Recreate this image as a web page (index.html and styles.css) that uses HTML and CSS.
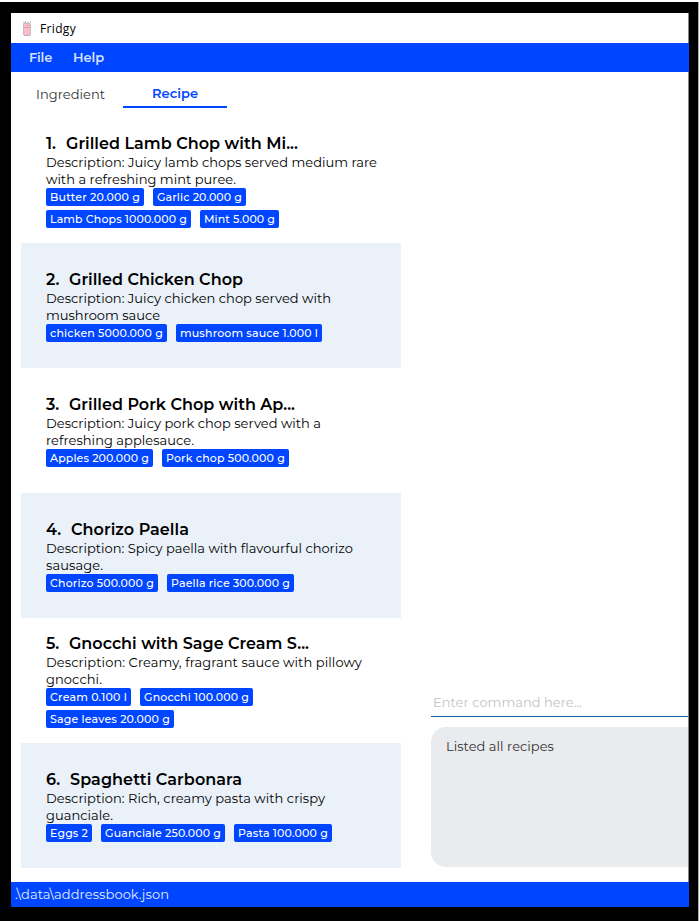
FILE: index.html
```html
<!DOCTYPE html>
<html lang="en">
<head>
<meta charset="utf-8">
<title>Fridgy</title>
<link rel="stylesheet" href="styles.css">
</head>
<body>
<div class="frame">
<div class="window">
  <header class="titlebar">
    <svg class="logo" width="10" height="16" viewBox="0 0 10 16">
      <path d="M1 1h2v1H1zM3 0h1v2H3zM5 1h2v1H5zM8 0h1v2H8z" fill="#c4c4c4"/>
      <rect x="1" y="2" width="8" height="12.500" rx="1" fill="#f7bfca"/>
      <path d="M1.500 3v11M8.500 3v11M2 2.500h6" stroke="#cdb9c1" fill="none"/>
      <path d="M2 6.500h6M5 4.500h2" stroke="#d99fae" fill="none"/>
      <path d="M2 14.500h6" stroke="#b5b0b3"/>
    </svg>
    <span data-w="36">Fridgy</span>
  </header>
  <nav class="menubar"><span data-w="23">File</span><span data-w="31">Help</span></nav>
  <main class="content">
    <section class="left">
      <div class="tabs">
        <div class="tab"><span data-w="69">Ingredient</span></div>
        <div class="tab active"><span data-w="46">Recipe</span></div>
      </div>
      <div class="list">
        <article class="card">
          <h2><span class="num">1.</span><span data-w="232">Grilled Lamb Chop with Mi...</span></h2>
          <p><span data-w="331">Description: Juicy lamb chops served medium rare</span><br><span data-w="190">with a refreshing mint puree.</span></p>
          <div class="tags"><span class="tag"><span data-w="90">Butter 20.000 g</span></span><span class="tag"><span data-w="85">Garlic 20.000 g</span></span><span class="tag"><span data-w="137">Lamb Chops 1000.000 g</span></span><span class="tag"><span data-w="71">Mint 5.000 g</span></span></div>
        </article>
        <article class="card">
          <h2><span class="num n2">2.</span><span data-w="174">Grilled Chicken Chop</span></h2>
          <p><span data-w="285">Description: Juicy chicken chop served with</span><br><span data-w="114">mushroom sauce</span></p>
          <div class="tags"><span class="tag"><span data-w="113">chicken 5000.000 g</span></span><span class="tag"><span data-w="138">mushroom sauce 1.000 l</span></span></div>
        </article>
        <article class="card">
          <h2><span class="num n2">3.</span><span data-w="226">Grilled Pork Chop with Ap...</span></h2>
          <p><span data-w="275">Description: Juicy pork chop served with a</span><br><span data-w="148">refreshing applesauce.</span></p>
          <div class="tags"><span class="tag"><span data-w="99">Apples 200.000 g</span></span><span class="tag"><span data-w="119">Pork chop 500.000 g</span></span></div>
        </article>
        <article class="card">
          <h2><span class="num n4">4.</span><span data-w="118">Chorizo Paella</span></h2>
          <p><span data-w="307">Description: Spicy paella with flavourful chorizo</span><br><span data-w="57">sausage.</span></p>
          <div class="tags"><span class="tag"><span data-w="104">Chorizo 500.000 g</span></span><span class="tag"><span data-w="119">Paella rice 300.000 g</span></span></div>
        </article>
        <article class="card">
          <h2><span class="num n2">5.</span><span data-w="240">Gnocchi with Sage Cream S...</span></h2>
          <p><span data-w="316">Description: Creamy, fragrant sauce with pillowy</span><br><span data-w="56">gnocchi.</span></p>
          <div class="tags"><span class="tag"><span data-w="77">Cream 0.100 l</span></span><span class="tag"><span data-w="105">Gnocchi 100.000 g</span></span><span class="tag"><span data-w="120">Sage leaves 20.000 g</span></span></div>
        </article>
        <article class="card">
          <h2><span class="num n6">6.</span><span data-w="172">Spaghetti Carbonara</span></h2>
          <p><span data-w="279">Description: Rich, creamy pasta with crispy</span><br><span data-w="67">guanciale.</span></p>
          <div class="tags"><span class="tag"><span data-w="38">Eggs 2</span></span><span class="tag"><span data-w="116">Guanciale 250.000 g</span></span><span class="tag"><span data-w="90">Pasta 100.000 g</span></span></div>
        </article>
      </div>
    </section>
    <section class="right">
      <div class="command"><span data-w="149">Enter command here...</span></div>
      <div class="result"><span data-w="108">Listed all recipes</span></div>
    </section>
  </main>
  <footer class="status"><span data-w="154">.\data\addressbook.json</span></footer>
</div>
</div>
<script src="fit.js"></script>
</body>
</html>
```
FILE: styles.css
```css
* { box-sizing: border-box; }
body {
  margin: 0;
  width: 700px;
  height: 921px;
  padding: 2px 1px 0 0;
  background: #fff;
  font: 13px/17px Montserrat, Inter, sans-serif;
  color: #000;
  overflow: hidden;
}
[data-w] { white-space: nowrap; }
.frame {
  width: 699px;
  height: 919px;
  padding: 11px 9px 14px 11px;
  background: #000;
  border-right: 1px solid #aaa;
}
.window {
  height: 894px;
  background: #fff;
  display: flex;
  flex-direction: column;
  border-right: 1px solid #888;
}
.titlebar {
  height: 30px;
  display: flex;
  align-items: center;
  gap: 8px;
  padding: 1px 0 0 11px;
  font: 12px/17px "Open Sans", sans-serif;
  color: #000;
}
.menubar {
  height: 29px;
  display: flex;
  align-items: center;
  gap: 21px;
  padding-left: 18px;
  background: #0045ff;
  color: #d5e1ff;
  font-weight: 600;
  margin-right: -1px;
}
.content { flex: 1; display: flex; }
.left { width: 390px; padding-left: 10px; }
.tabs { display: flex; height: 36px; }
.tab {
  width: 102px;
  padding: 14px 0 0 15px;
  color: #333;
}
.tab.active {
  width: 104px;
  padding: 13px 0 0 29px;
  color: #0045ff;
  font-weight: 600;
  border-bottom: 2px solid #0045ff;
}
.list { margin-top: 10px; }
.card {
  height: 125px;
  padding: 0 15px 0 25px;
  display: flex;
  flex-direction: column;
  justify-content: center;
}
.card:nth-child(even) { background: #eaf1f9; }
h2 {
  margin: 1px 0 0;
  display: flex;
  height: 20px;
  font-size: 16px;
  line-height: 19px;
  font-weight: 600;
  color: #000;
}
.num { width: 20px; }
.n2 { width: 23px; }
.n4 { width: 25px; }
.n6 { width: 24px; }
p { margin: 0; height: 34px; }
.tags { display: flex; flex-wrap: wrap; gap: 4px 9px; }
.tag {
  height: 18px;
  padding: 0 4px;
  border-radius: 2px;
  background: #0045ff;
  color: #fff;
  font-size: 11px;
  line-height: 18px;
  font-weight: 500;
}
.right {
  flex: 1;
  display: flex;
  flex-direction: column;
  justify-content: flex-end;
  padding: 0 0 15px 30px;
}
.command {
  height: 24px;
  padding: 1px 0 0 2px;
  border-bottom: 1px solid #1d5d9b;
  color: #c4c4c4;
}
.result {
  height: 140px;
  margin-top: 10px;
  padding: 11px 15px;
  border-radius: 15px 0 0 15px;
  background: #eaebef;
  color: #333;
}
.status {
  height: 25px;
  padding: 4px 0 0 4px;
  margin-right: -1px;
  background: #0045ff;
  color: #e4ecff;
}
```
FILE: fit.js
```js
// Adjusts tracking so each label occupies its nominal width.
document.querySelectorAll("[data-w]").forEach(function (el) {
  var extra = Number(el.dataset.w) - el.getBoundingClientRect().width;
  el.style.letterSpacing = extra / el.textContent.length + "px";
});
```
